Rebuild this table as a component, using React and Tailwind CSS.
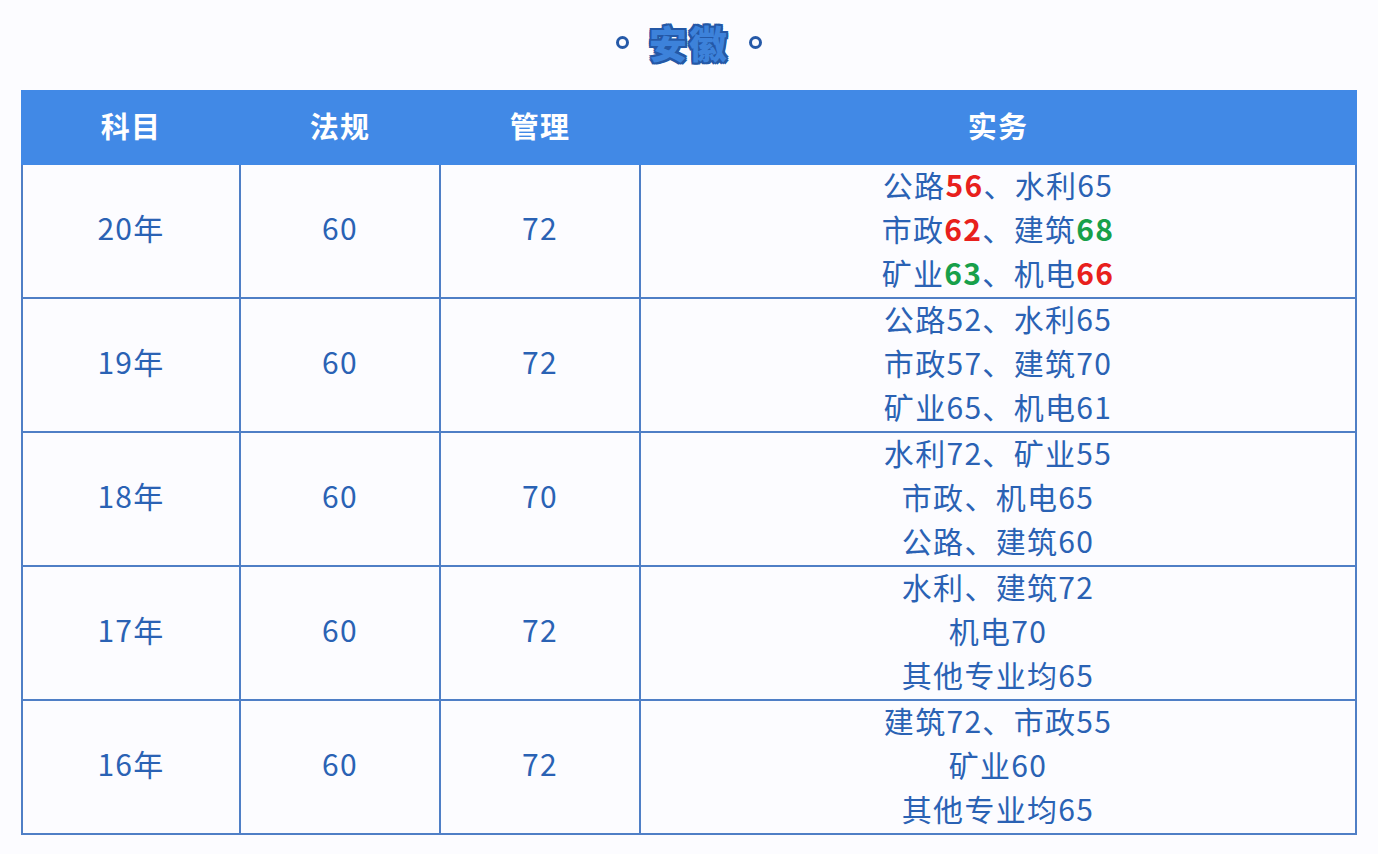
const rows = [
  {
    year: "20年",
    law: "60",
    mgmt: "72",
    lines: [
      [["公路"], ["56", "red"], ["、水利65"]],
      [["市政"], ["62", "red"], ["、建筑"], ["68", "green"]],
      [["矿业"], ["63", "green"], ["、机电"], ["66", "red"]],
    ],
  },
  {
    year: "19年",
    law: "60",
    mgmt: "72",
    lines: [[["公路52、水利65"]], [["市政57、建筑70"]], [["矿业65、机电61"]]],
  },
  {
    year: "18年",
    law: "60",
    mgmt: "70",
    lines: [[["水利72、矿业55"]], [["市政、机电65"]], [["公路、建筑60"]]],
  },
  {
    year: "17年",
    law: "60",
    mgmt: "72",
    lines: [[["水利、建筑72"]], [["机电70"]], [["其他专业均65"]]],
  },
  {
    year: "16年",
    law: "60",
    mgmt: "72",
    lines: [[["建筑72、市政55"]], [["矿业60"]], [["其他专业均65"]]],
  },
];

const tone = {
  red: "font-bold text-[#e8201c]",
  green: "font-bold text-[#17a04a]",
};

const font = { fontFamily: '"Noto Sans CJK SC", "Noto Sans", sans-serif' };

const titleStyle = {
  WebkitTextStroke: "4px #ffffff",
  paintOrder: "stroke fill",
  textShadow:
    "2px 0 0 #2458a6, -2px 0 0 #2458a6, 0 2px 0 #2458a6, 0 -2px 0 #2458a6, 2px 2px 0 #2458a6, -2px -2px 0 #2458a6, 2px -2px 0 #2458a6, -2px 2px 0 #2458a6",
};

export default function App() {
  return (
    <div
      className="min-h-[854px] w-[1378px] bg-[#fcfcff] pt-[18px]"
      style={font}
    >
      <div className="flex h-[48px] items-center justify-center gap-[20px]">
        <span className="h-[13px] w-[13px] rounded-full border-[3px] border-[#2559a8]" />
        <span
          className="text-[38px] font-black leading-none tracking-[2px] text-[#3d82da]"
          style={titleStyle}
        >
          安徽
        </span>
        <span className="h-[13px] w-[13px] rounded-full border-[3px] border-[#2559a8]" />
      </div>

      <table className="mx-[21px] mt-[24px] w-[1336px] table-fixed border-collapse text-[30px] tracking-[1.3px] text-[#2a62b4]">
        <colgroup>
          <col className="w-[218px]" />
          <col className="w-[200px]" />
          <col className="w-[200px]" />
          <col />
        </colgroup>
        <thead>
          <tr className="h-[73px] bg-[#4189e6] text-[29px] font-bold text-white">
            <th className="border-2 border-[#4189e6] pb-[4px]">科目</th>
            <th className="border-2 border-[#4189e6] pb-[4px]">法规</th>
            <th className="border-2 border-[#4189e6] pb-[4px]">管理</th>
            <th className="border-2 border-[#4189e6] pb-[4px]">实务</th>
          </tr>
        </thead>
        <tbody>
          {rows.map((r) => (
            <tr key={r.year} className="h-[134px] text-center">
              <td className="border-2 border-[#4f7fc6] pb-[7px]">{r.year}</td>
              <td className="border-2 border-[#4f7fc6] pb-[7px]">{r.law}</td>
              <td className="border-2 border-[#4f7fc6] pb-[7px]">{r.mgmt}</td>
              <td className="border-2 border-[#4f7fc6] p-0 leading-[44px]">
                <div className="-mt-[7px]">
                  {r.lines.map((line, i) => (
                    <div key={i}>
                      {line.map(([text, c], j) => (
                        <span key={j} className={c ? tone[c] : ""}>
                          {text}
                        </span>
                      ))}
                    </div>
                  ))}
                </div>
              </td>
            </tr>
          ))}
        </tbody>
      </table>
    </div>
  );
}
